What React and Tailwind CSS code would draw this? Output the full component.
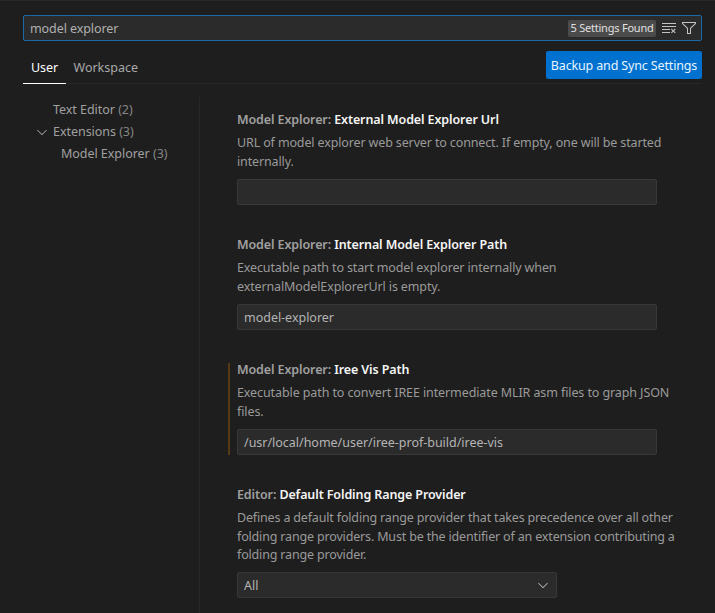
import { VscChevronDown, VscClearAll, VscFilter } from "react-icons/vsc";

const settings = [
  {
    category: "Model Explorer:",
    name: "External Model Explorer Url",
    lines: [
      "URL of model explorer web server to connect. If empty, one will be started",
      "internally.",
    ],
    value: "",
    tracking: "tracking-[-0.135px]",
  },
  {
    category: "Model Explorer:",
    name: "Internal Model Explorer Path",
    lines: [
      "Executable path to start model explorer internally when",
      "externalModelExplorerUrl is empty.",
    ],
    value: "model-explorer",
    tracking: "tracking-[-0.125px]",
  },
  {
    category: "Model Explorer:",
    name: "Iree Vis Path",
    lines: [
      "Executable path to convert IREE intermediate MLIR asm files to graph JSON",
      "files.",
    ],
    value: "/usr/local/home/user/iree-prof-build/iree-vis",
    modified: true,
    tracking: "tracking-[-0.1px]",
  },
  {
    category: "Editor:",
    name: "Default Folding Range Provider",
    lines: [
      "Defines a default folding range provider that takes precedence over all other",
      "folding range providers. Must be the identifier of an extension contributing a",
      "folding range provider.",
    ],
    value: "All",
    select: true,
    tracking: "tracking-[-0.165px]",
  },
];

function Setting({ category, name, lines, value, modified, select, tracking }) {
  return (
    <section className="relative mb-[30px]">
      {modified && (
        <div className="absolute -left-[9px] top-[3px] bottom-0 w-[2px] bg-[#553a14]" />
      )}
      <h3 className="h-[24.4px] whitespace-nowrap text-[12.5px] leading-[19px] font-semibold tracking-[-0.11px] text-[#a0a0a0]">
        {category} <span className="text-[#f5f5f5]">{name}</span>
      </h3>
      <div
        className={`pb-[7.8px] text-[12.5px] leading-[18.4px] whitespace-nowrap text-[#9a9a9a] ${tracking}`}
      >
        {lines.map((line) => (
          <p key={line}>{line}</p>
        ))}
      </div>
      <div
        className={`flex h-[26px] items-center justify-between rounded-[2px] border border-[#383838] bg-[#2b2b2b] px-[6px] text-[12.5px] tracking-[-0.02px] text-[#b4b4b4] ${
          select ? "w-[320px]" : "w-[420px]"
        }`}
      >
        <span className="pt-[2px]">{value}</span>
        {select && <VscChevronDown className="-mr-px size-4 text-[#b4b4b4]" />}
      </div>
    </section>
  );
}

export default function App() {
  return (
    <div className="flex h-[613px] w-[715px] flex-col overflow-hidden border-t border-[#252829] bg-[#1e1e1e] pl-[23px] pr-[13px] pt-[14px] font-['Noto_Sans',sans-serif] text-[12.5px] text-[#a8a8a8]">
      <div className="flex h-[26px] shrink-0 items-center rounded-[2px] border border-[#1b69a6] bg-[#2b2b2b] pl-[6px] pr-[4px]">
        <span className="flex-1 pt-[2px] tracking-[-0.08px] text-[#b0b0b0]">
          model explorer
        </span>
        <span className="flex h-[17px] w-[88px] items-center justify-center rounded-[2px] bg-[#4b4b4b] text-[11px] tracking-[-0.22px] whitespace-nowrap text-[#e0e0e0]">
          5 Settings Found
        </span>
        <VscClearAll className="ml-[5px] size-4 text-[#c4c4c4]" />
        <VscFilter className="ml-[4px] size-4 text-[#c4c4c4]" />
      </div>

      <header className="flex h-[43px] shrink-0 items-end justify-between border-b border-[#262626]">
        <nav className="-mb-px flex">
          <div className="flex h-[32px] w-[43px] justify-center border-b border-white pt-[6px] leading-[19px] tracking-[-0.1px] text-white">
            User
          </div>
          <div className="pl-[7.5px] pt-[6px] leading-[19px]">Workspace</div>
        </nav>
        <button className="mb-[4px] h-[28px] w-[156px] rounded-[2px] bg-[#0071cf] pt-[2px] tracking-[-0.15px] whitespace-nowrap text-[#e8f4ff]">
          Backup and Sync Settings
        </button>
      </header>

      <div className="flex min-h-0 flex-1">
        <aside className="mt-[13px] w-[177px] shrink-0 border-r border-[#282828] pt-[2px] leading-[22px] tracking-[-0.04px] whitespace-nowrap text-[#a0a0a0]">
          <div className="pl-[30px]">
            Text Editor <span className="text-[#858585]">(2)</span>
          </div>
          <div className="flex items-center pl-[11px]">
            <VscChevronDown className="mr-[3px] size-4" />
            <span>
              Extensions <span className="text-[#858585]">(3)</span>
            </span>
          </div>
          <div className="pl-[38px]">
            Model Explorer <span className="text-[#858585]">(3)</span>
          </div>
        </aside>
        <main className="min-w-0 flex-1 pl-[37px] pt-[26px]">
          {settings.map((s) => (
            <Setting key={s.name} {...s} />
          ))}
        </main>
      </div>
    </div>
  );
}
